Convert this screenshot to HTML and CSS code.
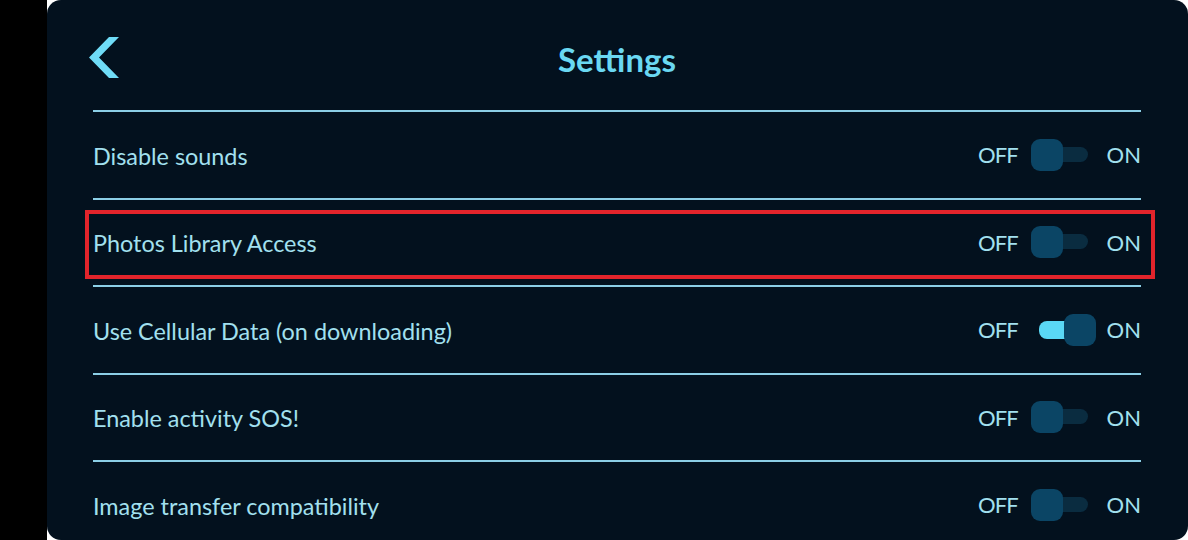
FILE: index.html
```html
<!DOCTYPE html>
<html lang="en">
<head>
<meta charset="utf-8">
<title>Settings</title>
<link rel="stylesheet" href="styles.css">
</head>
<body>
<div class="screen">
  <div class="side"></div>
  <div class="panel">
    <header class="header">
      <button class="back" aria-label="Back">
        <svg width="30" height="41" viewBox="0 0 30 41"><polygon points="0,20.5 20,0 30,0 10,20.5 30,41 20,41" fill="#6fdcf7"/></svg>
      </button>
      <h1 class="title">Settings</h1>
      <span class="spacer"></span>
    </header>
    <div class="row">
      <span class="label">Disable sounds</span>
      <div class="switch"><span class="off">OFF</span><span class="toggle"><i class="track"></i><i class="knob"></i></span><span>ON</span></div>
    </div>
    <div class="row highlighted">
      <span class="label">Photos Library Access</span>
      <div class="switch"><span class="off">OFF</span><span class="toggle"><i class="track"></i><i class="knob"></i></span><span>ON</span></div>
      <div class="mark"></div>
    </div>
    <div class="row">
      <span class="label">Use Cellular Data (on downloading)</span>
      <div class="switch"><span class="off">OFF</span><span class="toggle on"><i class="track"></i><i class="knob"></i></span><span>ON</span></div>
    </div>
    <div class="row">
      <span class="label">Enable activity SOS!</span>
      <div class="switch"><span class="off">OFF</span><span class="toggle"><i class="track"></i><i class="knob"></i></span><span>ON</span></div>
    </div>
    <div class="row">
      <span class="label">Image transfer compatibility</span>
      <div class="switch"><span class="off">OFF</span><span class="toggle"><i class="track"></i><i class="knob"></i></span><span>ON</span></div>
    </div>
  </div>
</div>
</body>
</html>
```

FILE: styles.css
```css
html, body {
  margin: 0;
  padding: 0;
  background: #ffffff;
  overflow: hidden;
}
.screen {
  display: flex;
  width: 1188px;
  height: 540px;
  font-family: Lato, "Open Sans", sans-serif;
}
.side {
  width: 47px;
  background: #000000;
  flex: none;
}
.panel {
  flex: 1;
  background: #03111e;
  border-radius: 14px;
  padding: 0 47px 0 46px;
  overflow: hidden;
}
.header {
  height: 110px;
  display: grid;
  grid-template-columns: 40px 1fr 40px;
  align-items: center;
}
.back {
  background: none;
  border: 0;
  padding: 0;
  margin: 5px 0 0 -4px;
  width: 30px;
  height: 41px;
  display: block;
}
.back svg { display: block; }
.title {
  margin: 8px 0 0;
  text-align: center;
  font-size: 33px;
  font-weight: 700;
  color: #6ad8f2;
}
.row {
  position: relative;
  border-top: 2px solid #8ccfe6;
  height: 85.5px;
  display: flex;
  align-items: center;
  justify-content: space-between;
  color: #a2e0ef;
  font-size: 23.4px;
}
.label { margin-top: 2px; }
.switch {
  display: flex;
  align-items: center;
  gap: 12px;
  font-size: 22px;
}
.switch .off { letter-spacing: -1px; margin-right: 1px; }
.switch > span:last-child { margin-left: -1px; }
.toggle {
  position: relative;
  width: 65px;
  height: 32px;
}
.track {
  position: absolute;
  left: 8px;
  top: 8px;
  width: 49px;
  height: 15px;
  border-radius: 8px;
  background: #0a2c40;
}
.knob {
  position: absolute;
  left: 0;
  top: 0;
  width: 32px;
  height: 32px;
  border-radius: 9px;
  background: #0b4565;
}
.toggle.on .track {
  top: 7px;
  height: 18px;
  background: #5ad8f5;
}
.toggle.on .knob { left: 33px; }
.mark {
  position: absolute;
  left: -8px;
  right: -14px;
  top: 10px;
  height: 69px;
  box-sizing: border-box;
  border: 4px solid #e3242b;
  pointer-events: none;
}
```
